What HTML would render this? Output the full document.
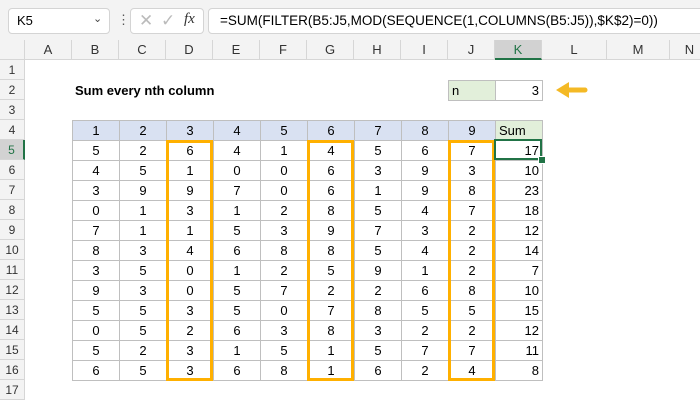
<!DOCTYPE html><html><head><style>
body{margin:0;width:700px;height:400px;overflow:hidden;background:#fff;font-family:"Liberation Sans",sans-serif;position:relative}
.a{position:absolute}
.top{left:0;top:0;width:700px;height:40px;background:#f3f3f3}
.box{background:#fff;border:1px solid #d4d4d4;border-radius:4px;top:8px;height:24px}
.ch{top:40px;height:20px;background:#f3f3f3;border-right:1px solid #d6d6d6;border-bottom:1px solid #d6d6d6;box-sizing:border-box;font-size:13px;color:#333;text-align:center;line-height:20px}
.rh{left:0;width:25px;height:20px;background:#f3f3f3;border-bottom:1px solid #d6d6d6;border-right:1px solid #d6d6d6;box-sizing:border-box;font-size:12px;color:#333;text-align:center;line-height:20px}
table{position:absolute;left:72px;top:120px;border-collapse:collapse}
td{width:46px;height:19px;border:1px solid #bfbfbf;padding:0;text-align:center;font-size:13px;color:#000;line-height:19px}
tr.h td{background:#d9e1f2}
td.s{text-align:right;padding-right:3px;width:40px}
tr.h td.s{background:#e2efda;text-align:left;padding-left:3px;padding-right:0;width:43px}
.o{border:3px solid #ffb000;box-sizing:border-box;top:140px;height:241px;width:47px}
</style></head><body>
<div class="a top"></div>
<div class="a box" style="left:8px;width:100px"><span class="a" style="left:8px;top:4px;font-size:13px">K5</span><span class="a" style="left:84px;top:3px;font-size:11px;color:#444">&#8964;</span></div>
<div class="a" style="left:117px;top:12px;font-size:13px;color:#555">&#8942;</div>
<div class="a box" style="left:130px;width:72px"><span class="a" style="left:8px;top:2px;font-size:17px;color:#bbb">&#10005;</span><span class="a" style="left:30px;top:2px;font-size:17px;color:#bbb">&#10003;</span><span class="a" style="left:53px;top:2px;font-size:15px;font-style:italic;font-family:'Liberation Serif',serif;color:#333">fx</span></div>
<div class="a box" style="left:208px;width:500px"><span class="a" style="left:11px;top:4px;font-size:13.5px;color:#000">=SUM(FILTER(B5:J5,MOD(SEQUENCE(1,COLUMNS(B5:J5)),$K$2)=0))</span></div>
<div class="a ch" style="left:0;width:25px"></div>
<div class="a ch" style="left:25px;width:47px">A</div>
<div class="a ch" style="left:72px;width:47px">B</div>
<div class="a ch" style="left:119px;width:47px">C</div>
<div class="a ch" style="left:166px;width:47px">D</div>
<div class="a ch" style="left:213px;width:47px">E</div>
<div class="a ch" style="left:260px;width:47px">F</div>
<div class="a ch" style="left:307px;width:47px">G</div>
<div class="a ch" style="left:354px;width:47px">H</div>
<div class="a ch" style="left:401px;width:47px">I</div>
<div class="a ch" style="left:448px;width:47px">J</div>
<div class="a ch" style="left:495px;width:47px;background:#d2d2d2;border-bottom:2px solid #217346;color:#217346">K</div>
<div class="a ch" style="left:542px;width:65px">L</div>
<div class="a ch" style="left:607px;width:63px">M</div>
<div class="a ch" style="left:670px;width:40px">N</div>
<div class="a rh" style="top:60px">1</div><div class="a rh" style="top:80px">2</div><div class="a rh" style="top:100px">3</div><div class="a rh" style="top:120px">4</div>
<div class="a rh" style="top:140px;background:#d2d2d2;color:#217346;border-right:2px solid #217346">5</div>
<div class="a rh" style="top:160px">6</div><div class="a rh" style="top:180px">7</div><div class="a rh" style="top:200px">8</div><div class="a rh" style="top:220px">9</div><div class="a rh" style="top:240px">10</div><div class="a rh" style="top:260px">11</div><div class="a rh" style="top:280px">12</div><div class="a rh" style="top:300px">13</div><div class="a rh" style="top:320px">14</div><div class="a rh" style="top:340px">15</div><div class="a rh" style="top:360px">16</div><div class="a rh" style="top:380px">17</div>
<div class="a" style="left:75px;top:83px;font-size:13px;font-weight:bold">Sum every nth column</div>
<div class="a" style="left:448px;top:80px;height:19px;border:1px solid #bfbfbf;background:#e2efda;font-size:13px;line-height:19px;padding-left:3px;width:43px">n</div>
<div class="a" style="left:495px;top:80px;width:43px;height:19px;border:1px solid #bfbfbf;font-size:13px;line-height:19px;text-align:right;padding-right:3px">3</div>
<svg class="a" style="left:553px;top:79px" width="36" height="22"><path d="M32 11H14" stroke="#f4b925" stroke-width="5" stroke-linecap="round"/><path d="M3 11L16 3V19Z" fill="#f4b925"/></svg>
<table>
<tr class="h"><td>1</td><td>2</td><td>3</td><td>4</td><td>5</td><td>6</td><td>7</td><td>8</td><td>9</td><td class="s">Sum</td></tr>
<tr><td>5</td><td>2</td><td>6</td><td>4</td><td>1</td><td>4</td><td>5</td><td>6</td><td>7</td><td class="s">17</td></tr>
<tr><td>4</td><td>5</td><td>1</td><td>0</td><td>0</td><td>6</td><td>3</td><td>9</td><td>3</td><td class="s">10</td></tr>
<tr><td>3</td><td>9</td><td>9</td><td>7</td><td>0</td><td>6</td><td>1</td><td>9</td><td>8</td><td class="s">23</td></tr>
<tr><td>0</td><td>1</td><td>3</td><td>1</td><td>2</td><td>8</td><td>5</td><td>4</td><td>7</td><td class="s">18</td></tr>
<tr><td>7</td><td>1</td><td>1</td><td>5</td><td>3</td><td>9</td><td>7</td><td>3</td><td>2</td><td class="s">12</td></tr>
<tr><td>8</td><td>3</td><td>4</td><td>6</td><td>8</td><td>8</td><td>5</td><td>4</td><td>2</td><td class="s">14</td></tr>
<tr><td>3</td><td>5</td><td>0</td><td>1</td><td>2</td><td>5</td><td>9</td><td>1</td><td>2</td><td class="s">7</td></tr>
<tr><td>9</td><td>3</td><td>0</td><td>5</td><td>7</td><td>2</td><td>2</td><td>6</td><td>8</td><td class="s">10</td></tr>
<tr><td>5</td><td>5</td><td>3</td><td>5</td><td>0</td><td>7</td><td>8</td><td>5</td><td>5</td><td class="s">15</td></tr>
<tr><td>0</td><td>5</td><td>2</td><td>6</td><td>3</td><td>8</td><td>3</td><td>2</td><td>2</td><td class="s">12</td></tr>
<tr><td>5</td><td>2</td><td>3</td><td>1</td><td>5</td><td>1</td><td>5</td><td>7</td><td>7</td><td class="s">11</td></tr>
<tr><td>6</td><td>5</td><td>3</td><td>6</td><td>8</td><td>1</td><td>6</td><td>2</td><td>4</td><td class="s">8</td></tr>
</table>
<div class="a o" style="left:166px"></div>
<div class="a o" style="left:307px"></div>
<div class="a o" style="left:448px"></div>
<div class="a" style="left:494px;top:139px;width:48px;height:21px;border:2px solid #217346;box-sizing:border-box"></div>
<div class="a" style="left:538px;top:156px;width:6px;height:6px;background:#217346;border:1px solid #fff"></div>
</body></html>
